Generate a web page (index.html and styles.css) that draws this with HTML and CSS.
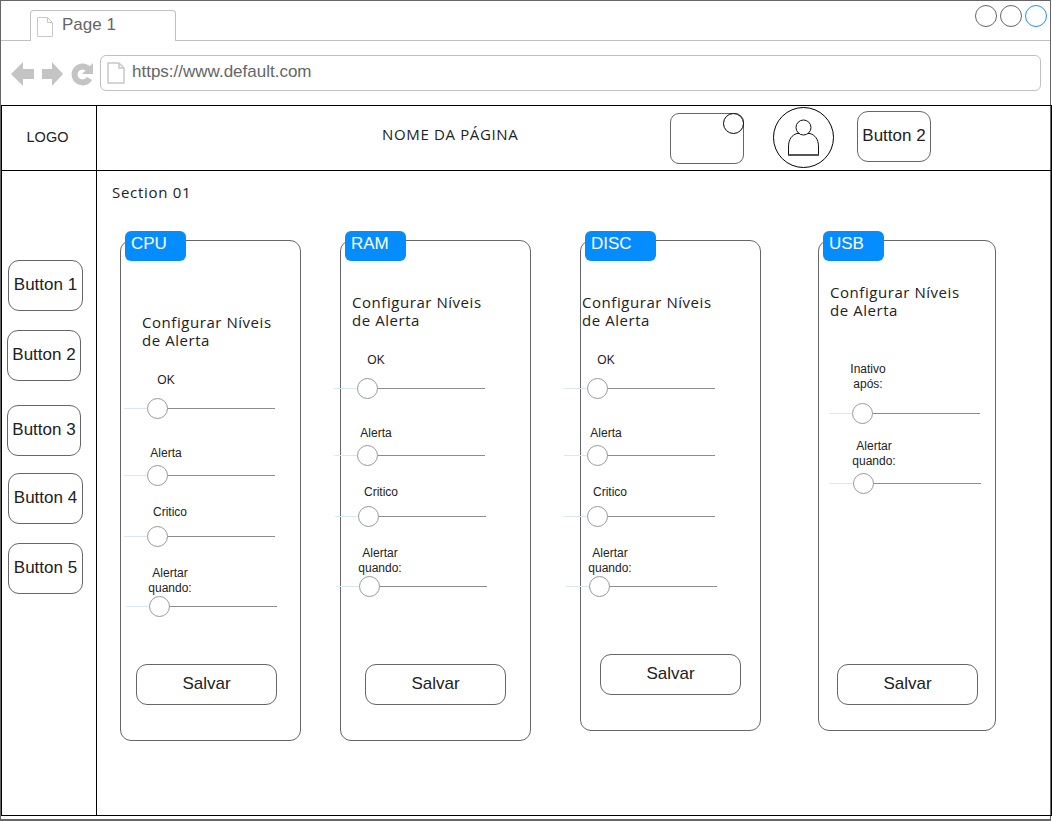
FILE: index.html
```html
<!DOCTYPE html>
<html lang="en">
<head>
  <meta charset="UTF-8">
  <title>Page 1</title>
  <link rel="stylesheet" href="styles.css">
</head>
<body>
  <div class="window">
    <div class="tabbar">
      <div class="tab">
        <svg class="page-icon" width="16" height="20" viewBox="0 0 16 20"><path d="M.5.5h10l5 5v14H.5zM10.5.5v5h5" fill="#fff" stroke="#c8c8c8"/></svg>
        <span>Page 1</span>
      </div>
      <div class="dots">
        <span class="dot"></span>
        <span class="dot"></span>
        <span class="dot dot-blue"></span>
      </div>
    </div>

    <div class="urlbar">
      <svg class="nav" width="84" height="26" viewBox="0 0 84 26">
        <path d="M0 13 12 1v7h11v10H12v7z" fill="#c4c4c4"/>
        <path d="M52 13 41 1v7H31v10h10v7z" fill="#c4c4c4"/>
        <path d="M82 2v11H71z" fill="#c4c4c4"/>
        <path d="M77.500 8A8 8 0 1 0 78.500 17.500" fill="none" stroke="#c4c4c4" stroke-width="6"/>
      </svg>
      <div class="address">
        <svg class="page-icon" width="18" height="22" viewBox="0 0 18 22"><path d="M1 1h11l5 5v15H1zM12 1v5h5" fill="#fff" stroke="#c8c8c8" stroke-width="1.500"/></svg>
        <span>https://www.default.com</span>
      </div>
    </div>

    <div class="frame">
      <header class="topbar">
        <div class="logo">LOGO</div>
        <div class="topbar-main">
          <div class="page-name">NOME DA PÁGINA</div>
          <div class="notify"><span class="notify-dot"></span></div>
          <div class="avatar">
            <svg width="33" height="39" viewBox="0 0 33 39"><path d="M1.500 37V29C1.500 21 5 17 10 15.500h13C28 17 31.500 21 31.500 29v8z" fill="#fff" stroke="#111"/><circle cx="16.500" cy="9.500" r="7.500" fill="#fff" stroke="#111"/><path d="M1 37h31" stroke="#444" stroke-width="1.500"/></svg>
          </div>
          <button class="btn btn-top">Button 2</button>
        </div>
      </header>

      <div class="body">
        <nav class="sidebar">
          <button class="btn side-btn side-b1">Button 1</button>
          <button class="btn side-btn side-b2">Button 2</button>
          <button class="btn side-btn side-b3">Button 3</button>
          <button class="btn side-btn side-b4">Button 4</button>
          <button class="btn side-btn side-b5">Button 5</button>
        </nav>

        <main class="section">
          <div class="section-title">Section 01</div>
          <div class="cards">

            <section class="card card-cpu">
              <div class="tag">CPU</div>
              <h2 class="card-title">Configurar Níveis de Alerta</h2>
              <div class="level level-ok">
                <div class="level-label">OK</div>
                <div class="slider"><span class="knob"></span></div>
              </div>
              <div class="level level-alerta">
                <div class="level-label">Alerta</div>
                <div class="slider"><span class="knob"></span></div>
              </div>
              <div class="level level-critico">
                <div class="level-label">Critico</div>
                <div class="slider"><span class="knob"></span></div>
              </div>
              <div class="level level-quando">
                <div class="level-label">Alertar quando:</div>
                <div class="slider"><span class="knob"></span></div>
              </div>
              <button class="btn save">Salvar</button>
            </section>

            <section class="card card-ram">
              <div class="tag">RAM</div>
              <h2 class="card-title">Configurar Níveis de Alerta</h2>
              <div class="level level-ok">
                <div class="level-label">OK</div>
                <div class="slider"><span class="knob"></span></div>
              </div>
              <div class="level level-alerta">
                <div class="level-label">Alerta</div>
                <div class="slider"><span class="knob"></span></div>
              </div>
              <div class="level level-critico">
                <div class="level-label">Critico</div>
                <div class="slider"><span class="knob"></span></div>
              </div>
              <div class="level level-quando">
                <div class="level-label">Alertar quando:</div>
                <div class="slider"><span class="knob"></span></div>
              </div>
              <button class="btn save">Salvar</button>
            </section>

            <section class="card card-disc">
              <div class="tag">DISC</div>
              <h2 class="card-title">Configurar Níveis de Alerta</h2>
              <div class="level level-ok">
                <div class="level-label">OK</div>
                <div class="slider"><span class="knob"></span></div>
              </div>
              <div class="level level-alerta">
                <div class="level-label">Alerta</div>
                <div class="slider"><span class="knob"></span></div>
              </div>
              <div class="level level-critico">
                <div class="level-label">Critico</div>
                <div class="slider"><span class="knob"></span></div>
              </div>
              <div class="level level-quando">
                <div class="level-label">Alertar quando:</div>
                <div class="slider"><span class="knob"></span></div>
              </div>
              <button class="btn save">Salvar</button>
            </section>

            <section class="card card-usb">
              <div class="tag">USB</div>
              <h2 class="card-title">Configurar Níveis de Alerta</h2>
              <div class="level level-inativo">
                <div class="level-label">Inativo após:</div>
                <div class="slider"><span class="knob"></span></div>
              </div>
              <div class="level level-quando">
                <div class="level-label">Alertar quando:</div>
                <div class="slider"><span class="knob"></span></div>
              </div>
              <button class="btn save">Salvar</button>
            </section>

          </div>
        </main>
      </div>
    </div>
  </div>
</body>
</html>
```

FILE: styles.css
```css
* {
  box-sizing: border-box;
}
body {
  margin: 0;
  background: #fff;
  font-family: "Liberation Sans", Arial, sans-serif;
  color: #222;
}
.window {
  width: 1051px;
  height: 821px;
  border: 1px solid #666;
  border-bottom-width: 2px;
  display: flex;
  flex-direction: column;
}

/* browser chrome */
.tabbar {
  height: 40px;
  flex: none;
  display: flex;
  justify-content: space-between;
  padding-left: 29px;
  border-bottom: 1px solid #c0c0c0;
}
.tab {
  width: 146px;
  height: 31px;
  margin-top: 9px;
  padding: 6px 0 0 6px;
  display: flex;
  gap: 9px;
  background: #fff;
  border: 1px solid #c0c0c0;
  border-bottom: 0;
  border-radius: 4px 4px 0 0;
  font-size: 17px;
  color: #666;
}
.tab span {
  line-height: 15px;
}
.dots {
  display: flex;
  gap: 3px;
  padding: 4px 3px 0 0;
}
.dot {
  width: 22px;
  height: 22px;
  border: 1px solid #666;
  border-radius: 50%;
}
.dot-blue {
  border-color: #1e90ff;
}
.urlbar {
  height: 64px;
  flex: none;
  display: flex;
  padding: 14px 9px 0 10px;
}
.nav {
  flex: none;
  margin: 6px 5px 0 0;
}
.address {
  flex: 1;
  height: 36px;
  padding: 6px 0 0 6px;
  display: flex;
  gap: 7px;
  border: 1px solid #c0c0c0;
  border-radius: 6px;
  font-size: 17px;
  color: #666;
}
.address span {
  line-height: 20px;
}

/* page frame */
.frame {
  flex: none;
  height: 711px;
  width: 1051px;
  border: 1px solid #000;
  display: flex;
  flex-direction: column;
}
.topbar {
  height: 65px;
  flex: none;
  display: flex;
  border-bottom: 1px solid #000;
}
.logo {
  width: 95px;
  flex: none;
  display: flex;
  align-items: center;
  justify-content: center;
  padding: 0 3px 2px 0;
  border-right: 1px solid #000;
  font-size: 14.500px;
}
.topbar-main {
  flex: 1;
  display: flex;
  align-items: flex-start;
}
.page-name {
  width: 136px;
  margin: 19px 0 0 285px;
  font-family: "Open Sans", sans-serif;
  font-size: 15px;
  line-height: 19px;
  letter-spacing: .65px;
  white-space: nowrap;
}
.btn {
  display: block;
  padding: 0 0 2px;
  background: #fff;
  border: 1px solid #666;
  border-radius: 11px;
  font-family: "Liberation Sans", Arial, sans-serif;
  font-size: 17px;
  color: #222;
}
.notify {
  position: relative;
  width: 74px;
  height: 51px;
  margin: 7px 0 0 152px;
  border: 1px solid #666;
  border-radius: 9px;
}
.notify-dot {
  position: absolute;
  top: -1px;
  right: -1px;
  width: 21px;
  height: 21px;
  background: #fff;
  border: 1px solid #000;
  border-radius: 50%;
}
.avatar {
  width: 61px;
  height: 61px;
  margin: 1px 0 0 29px;
  padding-top: 10px;
  display: flex;
  justify-content: center;
  border: 1px solid #000;
  border-radius: 50%;
}
.btn-top {
  width: 74px;
  height: 51px;
  margin: 5px 0 0 23px;
}
.body {
  flex: 1;
  display: flex;
  min-height: 0;
}
.sidebar {
  width: 95px;
  flex: none;
  border-right: 1px solid #000;
  padding-top: 89px;
}
.side-btn {
  width: 74px;
  height: 51px;
}
.side-b1 {
  width: 75px;
  margin-left: 6px;
}
.side-b2 {
  margin: 19px 0 0 5px;
}
.side-b3 {
  margin: 24px 0 0 5px;
}
.side-b4 {
  width: 75px;
  margin: 17px 0 0 6px;
}
.side-b5 {
  width: 75px;
  margin: 19px 0 0 6px;
}

/* content */
.section {
  flex: 1;
  padding: 12px 0 0 15px;
}
.section-title {
  font-family: "Open Sans", sans-serif;
  font-size: 15px;
  line-height: 19px;
  letter-spacing: .7px;
}
.cards {
  display: flex;
  align-items: flex-start;
  margin: 38px 0 0 8px;
}
.card {
  position: relative;
  flex: none;
  display: flex;
  flex-direction: column;
  border: 1px solid #666;
  border-radius: 11px;
}
.card-cpu {
  width: 181px;
  height: 501px;
  padding-top: 72px;
}
.card-ram {
  width: 191px;
  height: 501px;
  margin-left: 39px;
  padding-top: 52px;
}
.card-disc {
  width: 181px;
  height: 491px;
  margin-left: 49px;
  padding-top: 52px;
}
.card-usb {
  width: 178px;
  height: 491px;
  margin-left: 57px;
  padding-top: 42px;
}
.tag {
  position: absolute;
  top: -10px;
  left: 4px;
  width: 61px;
  height: 30px;
  padding: 3px 0 0 6px;
  background: #058cff;
  border-radius: 6px;
  font-size: 17px;
  line-height: 20px;
  color: #fff;
}
.card-disc .tag {
  width: 71px;
}
.card-title {
  width: 145px;
  margin: 0 0 0 21px;
  font-family: "Open Sans", sans-serif;
  font-size: 15px;
  font-weight: 400;
  line-height: 18px;
  letter-spacing: .55px;
}
.card-ram .card-title {
  margin-left: 11px;
}
.card-disc .card-title {
  margin-left: 1px;
}
.card-usb .card-title {
  margin-left: 11px;
}

/* sliders */
.level {
  width: 151px;
  display: flex;
  flex-direction: column;
  align-items: flex-start;
}
.level-label {
  width: 84px;
  padding: 0 16px;
  font-size: 12px;
  line-height: 15px;
  text-align: center;
  color: #222;
}
.slider {
  position: relative;
  width: 151px;
  height: 21px;
  background: linear-gradient(#8c8c8c, #8c8c8c) right 10px no-repeat;
  background-size: 127px 1px;
}
.slider::before {
  content: "";
  position: absolute;
  top: 10px;
  left: 0;
  width: 24px;
  height: 1px;
  background: #d7e8f7;
}
.knob {
  position: absolute;
  top: 0;
  left: 23px;
  width: 21px;
  height: 21px;
  background: #fff;
  border: 1px solid #999;
  border-radius: 50%;
}
.level-ok {
  margin-top: 24px;
}
.level-ok .level-label {
  margin-bottom: 10px;
}
.level-alerta {
  margin-top: 27px;
}
.level-alerta .level-label {
  margin-bottom: 4px;
}
.level-critico {
  margin-top: 19px;
}
.level-critico .level-label {
  width: 92px;
  margin-bottom: 6px;
}
.level-quando {
  margin-top: 19px;
}
.level-quando .level-label {
  width: 88px;
}
.level-inativo {
  margin-top: 43px;
}
.level-inativo .level-label {
  width: 78px;
  margin-bottom: 11px;
}
.save {
  width: 141px;
  height: 41px;
}

/* card 1 */
.card-cpu .level {
  margin-left: 3px;
}
.card-cpu .level-quando {
  margin-left: 5px;
}
.card-cpu .save {
  margin: 47px 0 0 15px;
}

/* card 2 */
.card-ram .level {
  margin-left: -7px;
}
.card-ram .level-critico {
  margin-left: -6px;
}
.card-ram .level-quando {
  margin-left: -5px;
}
.card-ram .save {
  margin: 67px 0 0 24px;
}

/* card 3 */
.card-disc .level {
  margin-left: -17px;
}
.card-disc .level-quando {
  margin-left: -15px;
}
.card-disc .save {
  margin: 57px 0 0 19px;
}

/* card 4 */
.card-usb .level {
  margin-left: 10px;
}
.card-usb .level-quando {
  margin-top: 15px;
  margin-left: 11px;
}
.card-usb .level-quando .level-label {
  margin-bottom: 4px;
}
.card-usb .save {
  margin: 170px 0 0 18px;
}
```
